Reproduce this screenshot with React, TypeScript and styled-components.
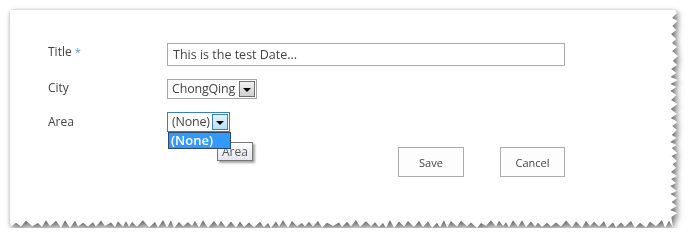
import styled, { createGlobalStyle } from 'styled-components';

const GlobalStyle = createGlobalStyle`
  body {
    margin: 0;
    background: #fff;
    font-family: "Open Sans", "Liberation Sans", sans-serif;
  }
`;

const CARD_W = 668;
const CARD_H = 218;

// torn paper edge along the right and bottom sides
function tornPolygon() {
  let seed = 11;
  const rnd = () => {
    seed = (seed * 9301 + 49297) % 233280;
    return seed / 233280;
  };
  const pts: string[] = ['0px 0px', `${CARD_W - 3}px 0px`];
  let out = true;
  for (let y = 3; y < CARD_H - 7; y += 3 + Math.round(rnd() * 2)) {
    const x = out ? CARD_W - rnd() * 2 : CARD_W - 5 - rnd() * 3;
    pts.push(`${x.toFixed(1)}px ${y}px`);
    out = !out;
  }
  out = true;
  for (let x = CARD_W - 5; x > 0; x -= 3 + Math.round(rnd() * 3)) {
    const y = out ? CARD_H - rnd() * 2 : CARD_H - 5 - rnd() * 3;
    pts.push(`${x}px ${y.toFixed(1)}px`);
    out = !out;
  }
  pts.push(`0px ${CARD_H - 5}px`);
  return `polygon(${pts.join(', ')})`;
}

const TORN = tornPolygon();

const Page = styled.div`
  padding: 10px 0 0 10px;
`;

const Shadow = styled.div`
  width: ${CARD_W}px;
  filter: drop-shadow(2px 3px 3px rgba(0, 0, 0, 0.55))
    drop-shadow(0 0 1px rgba(0, 0, 0, 0.15));
`;

const Card = styled.div`
  width: ${CARD_W}px;
  height: ${CARD_H}px;
  box-sizing: border-box;
  background: #fff;
  clip-path: ${TORN};
  padding: 33px 0 0 38px;
`;

const Row = styled.div<{ $gap?: number }>`
  display: flex;
  align-items: flex-start;
  margin-top: ${(p) => p.$gap ?? 0}px;
`;

const Label = styled.div<{ $top: number }>`
  width: 119px;
  flex: none;
  padding-top: ${(p) => p.$top}px;
  font-size: 12px;
  line-height: 16px;
  color: #444;
`;

const Required = styled.span`
  color: #5b9bd5;
  font-size: 11px;
  margin-left: 3px;
`;

const TextInput = styled.div`
  width: 398px;
  height: 23px;
  box-sizing: border-box;
  border: 1px solid #ababab;
  padding-left: 5px;
  font-size: 12.5px;
  line-height: 21px;
  color: #444;
`;

const Select = styled.div<{ $width: number; $focused?: boolean }>`
  position: relative;
  width: ${(p) => p.$width}px;
  height: 20px;
  box-sizing: border-box;
  border: 1px solid ${(p) => (p.$focused ? '#3c7fb1' : '#a6a6a6')};
  display: flex;
  align-items: center;
  font-size: 12.5px;
  letter-spacing: -0.2px;
  color: #444;
`;

const SelectText = styled.span`
  flex: 1;
  padding-left: 4px;
  line-height: 18px;
  white-space: nowrap;
  overflow: hidden;
`;

const Arrow = styled.span<{ $focused?: boolean }>`
  width: 16px;
  height: 16px;
  flex: none;
  margin-right: 1px;
  box-sizing: border-box;
  border: 1px solid ${(p) => (p.$focused ? '#3c7fb1' : '#707070')};
  background: ${(p) =>
    p.$focused
      ? 'linear-gradient(#e5f4fc, #b7e0f8)'
      : 'linear-gradient(#f2f2f2, #cfcfcf)'};
  display: flex;
  align-items: center;
  justify-content: center;
  &::after {
    content: '';
    border-left: 4px solid transparent;
    border-right: 4px solid transparent;
    border-top: 4px solid #000;
    margin-top: 1px;
  }
`;

const DropList = styled.div`
  position: absolute;
  z-index: 2;
  left: 0;
  top: 19px;
  width: 63px;
  height: 17px;
  box-sizing: border-box;
  border: 1px solid #2c4a66;
  background: #3399ff;
  color: #fff;
  font-size: 13px;
  font-weight: 600;
  letter-spacing: 0;
  line-height: 14px;
  padding-left: 2px;
`;

const Tooltip = styled.div`
  position: absolute;
  z-index: 1;
  left: 49px;
  top: 29px;
  height: 19px;
  box-sizing: border-box;
  border: 1px solid #767676;
  background: linear-gradient(#fff, #e4e5f0);
  box-shadow: 2px 2px 2px rgba(0, 0, 0, 0.35);
  padding: 0 4px;
  font-size: 12px;
  letter-spacing: 0;
  line-height: 17px;
  color: #575757;
`;

const ButtonRow = styled.div`
  display: flex;
  justify-content: flex-end;
  gap: 36px;
  width: 398px;
  margin: 15px 0 0 119px;
`;

const Button = styled.button<{ $width: number }>`
  width: ${(p) => p.$width}px;
  height: 30px;
  border: 1px solid #ababab;
  background: #fdfdfd;
  font-family: inherit;
  font-size: 11px;
  color: #444;
  padding: 0;
`;

export default function App() {
  return (
    <Page>
      <GlobalStyle />
      <Shadow>
        <Card>
          <Row>
            <Label $top={1}>
              Title<Required>*</Required>
            </Label>
            <TextInput>This is the test Date...</TextInput>
          </Row>
          <Row $gap={13}>
            <Label $top={1}>City</Label>
            <Select $width={90}>
              <SelectText>ChongQing</SelectText>
              <Arrow />
            </Select>
          </Row>
          <Row $gap={13}>
            <Label $top={2}>Area</Label>
            <Select $width={63} $focused>
              <SelectText>(None)</SelectText>
              <Arrow $focused />
              <DropList>(None)</DropList>
              <Tooltip>Area</Tooltip>
            </Select>
          </Row>
          <ButtonRow>
            <Button $width={66}>Save</Button>
            <Button $width={65}>Cancel</Button>
          </ButtonRow>
        </Card>
      </Shadow>
    </Page>
  );
}
